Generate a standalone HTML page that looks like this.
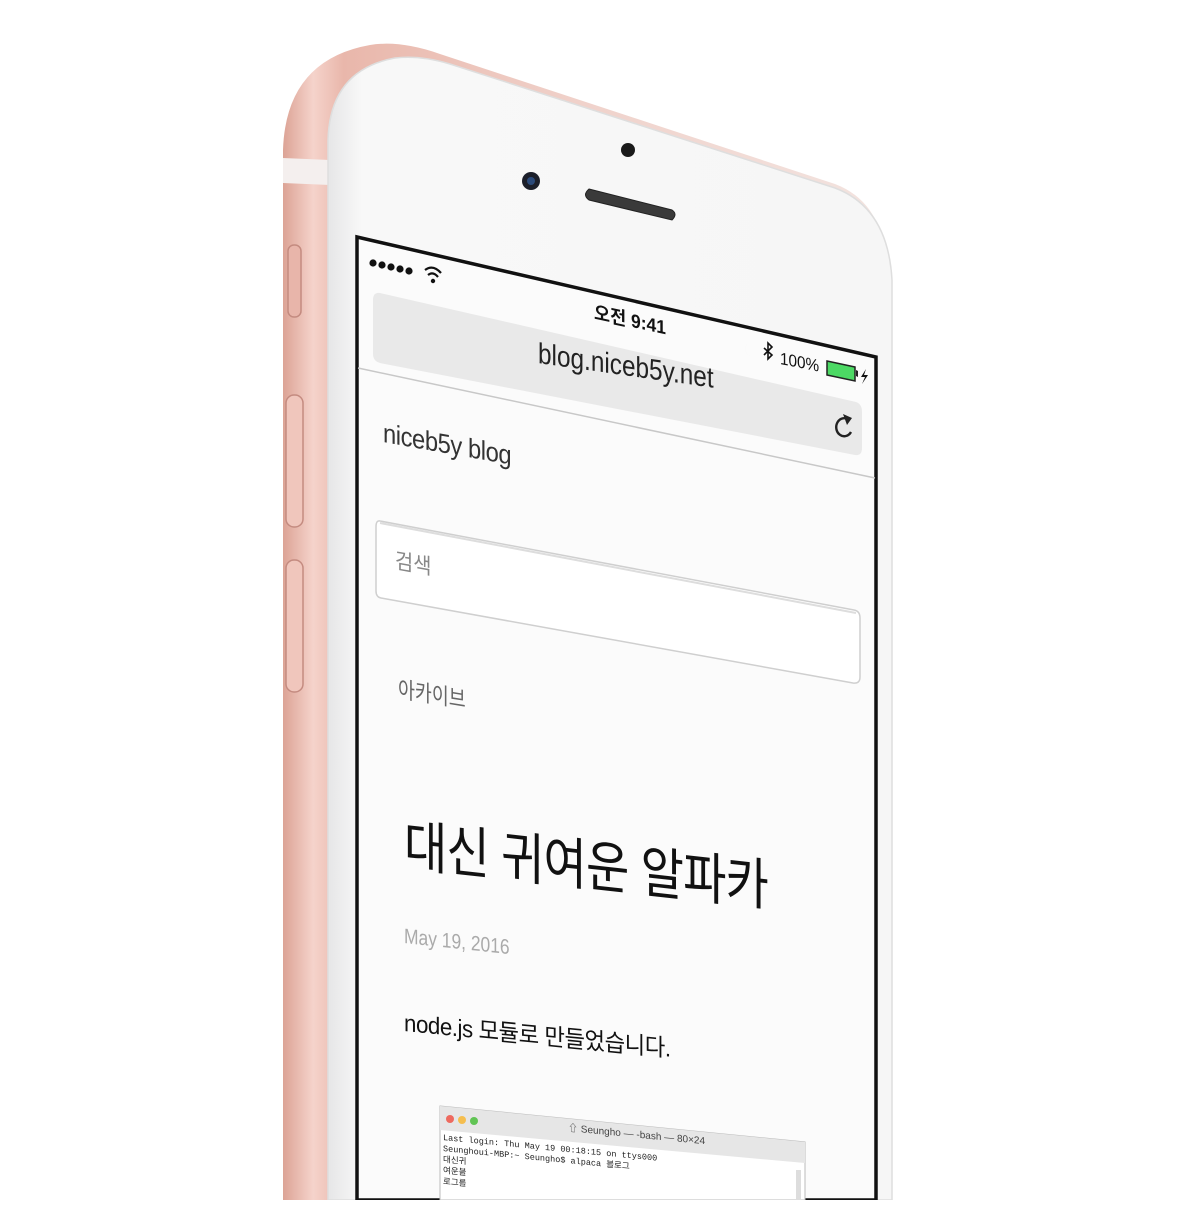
<!DOCTYPE html>
<html><head><meta charset="utf-8">
<style>
html,body{margin:0;padding:0;background:#fff;}
body{width:1200px;height:1200px;position:relative;overflow:hidden;font-family:"Liberation Sans","Noto Sans CJK KR",sans-serif;}
svg{position:absolute;left:0;top:0;}
.t{position:absolute;white-space:nowrap;transform-origin:0 0;line-height:1;}
</style></head><body>
<svg width="1200" height="1200" viewBox="0 0 1200 1200">
  <defs>
    <linearGradient id="pk" x1="0" x2="1" y1="0" y2="0">
      <stop offset="0" stop-color="#dca395"/>
      <stop offset="0.05" stop-color="#f5d3cb"/>
      <stop offset="0.1" stop-color="#e9b7ab"/>
      <stop offset="0.5" stop-color="#f0d2cb"/>
      <stop offset="1" stop-color="#f3e4e0"/>
    </linearGradient>
    <linearGradient id="wf" x1="0" x2="1" y1="0" y2="0">
      <stop offset="0" stop-color="#e6e6e7"/>
      <stop offset="0.06" stop-color="#f8f8f8"/>
      <stop offset="1" stop-color="#f6f6f6"/>
    </linearGradient>
  </defs>
  <!-- pink frame -->
  <path d="M283 1200 L283 150 Q286 60 370 45 Q400 40 440 54 L835 184 Q882 202 886 262 L886 1200 Z" fill="url(#pk)"/>
  <!-- antenna band -->
  <path d="M283 158 L330 160 L330 185 L283 183 Z" fill="#f4efee"/>
  <!-- buttons -->
  <rect x="288" y="245" width="13" height="72" rx="6" fill="#e8b5aa" stroke="#c48b80" stroke-width="1.5"/>
  <rect x="286" y="395" width="17" height="132" rx="8" fill="#f0c6bc" stroke="#c48b80" stroke-width="1.5"/>
  <rect x="286" y="560" width="17" height="132" rx="8" fill="#f0c6bc" stroke="#c48b80" stroke-width="1.5"/>
  <!-- white face -->
  <path d="M328 1200 L328 140 Q330 70 395 58 Q420 55 450 64 L835 188 Q888 208 892 280 L892 1200 Z" fill="url(#wf)" stroke="#dedede" stroke-width="1.5"/>
  <!-- camera, sensor, speaker -->
  <circle cx="531" cy="181" r="9" fill="#1c1f2a"/>
  <circle cx="531" cy="181" r="4" fill="#2b4a7a"/>
  <circle cx="628" cy="150" r="7" fill="#1a1a1a"/>
  <path d="M589 189 L672 210 Q678 214 672 220 L589 200 Q582 195 589 189 Z" fill="#3a3a3a" stroke="#222" stroke-width="1"/>
  <!-- screen -->
  <path d="M357 237 L876 357 L876 1200 L357 1200 Z" fill="#fbfbfb" stroke="#111" stroke-width="3.5"/>
  <!-- url bar -->
  <path d="M380 293 L856 402 Q862 404 862 412 L862 448 Q862 456 855 455 L380 363 Q373 361 373 354 L373 300 Q373 292 380 293 Z" fill="#e9e9e9"/>
  <!-- separator -->
  <path d="M358 368 L875 478" stroke="#c8c8c8" stroke-width="1.5"/>
  <!-- signal dots -->
  <g fill="#111"><circle cx="373" cy="263" r="3.6"/><circle cx="382" cy="265" r="3.6"/><circle cx="391" cy="267" r="3.6"/><circle cx="400" cy="269" r="3.6"/><circle cx="409" cy="271" r="3.6"/></g>
  <!-- wifi -->
  <g fill="none" stroke="#111" stroke-width="2.2"><path d="M425 270 Q433 264 441 273"/><path d="M428 275 Q433 271 438 277"/></g>
  <circle cx="433" cy="281" r="2.2" fill="#111"/>
  <!-- moon -->
  <path d="M750 342 A6 6 0 1 0 756 356 A6 6 0 0 1 750 342 Z" fill="#bbb"/>
  <!-- bluetooth -->
  <path d="M764 348 L772 355 L768 359 L768 343 L772 347 L764 355" fill="none" stroke="#111" stroke-width="1.6"/>
  <!-- battery -->
  <path d="M827 361 L855 367 L855 381 L827 375 Z" fill="#4cd964" stroke="#222" stroke-width="1.5"/>
  <path d="M856 370 L858 371 L858 377 L856 376 Z" fill="#222"/>
  <path d="M866 369 L861 377 L865 377 L862 384 L868 375 L864 375 Z" fill="#111"/>
  <!-- reload -->
  <path d="M849 420 A8 9 0 1 0 851 432" fill="none" stroke="#222" stroke-width="2.4"/>
  <path d="M843 414 L852 418 L847 425 Z" fill="#222"/>
  <!-- search box -->
  <path d="M380 521 L854 610 Q860 611 860 618 L860 677 Q860 684 853 683 L381 598 Q376 597 376 591 L376 527 Q376 520 380 521 Z" fill="#fff" stroke="#cfcfcf" stroke-width="1.5"/>
  <path d="M380 523 L856 613" stroke="#ddd" stroke-width="2"/>
  <!-- terminal -->
  <g>
    <path d="M440 1106 L805 1142 L805 1200 L440 1200 Z" fill="#fff" stroke="#bbb" stroke-width="1"/>
    <path d="M440 1106 L805 1142 L805 1163 L440 1130 Z" fill="#e6e6e6"/>
    <circle cx="450" cy="1119" r="4" fill="#ee6a5f"/>
    <circle cx="462" cy="1120" r="4" fill="#f5be4f"/>
    <circle cx="474" cy="1121" r="4" fill="#61c454"/>
    <rect x="796" y="1170" width="5" height="30" fill="#ddd"/>
  </g>
</svg>

<div class="t" style="left:594px;top:304px;font-size:19px;font-weight:bold;color:#111;transform:skewY(12deg) scaleX(0.92);">오전 9:41</div>
<div class="t" style="left:780px;top:350px;font-size:17px;color:#111;transform:skewY(11deg) scaleX(0.9);">100%</div>
<div class="t" style="left:538px;top:340px;font-size:29px;color:#222;transform:skewY(8deg) scaleX(0.84);">blog.niceb5y.net</div>
<div class="t" style="left:383px;top:420px;font-size:27px;color:#333;transform:skewY(10deg) scaleX(0.88);letter-spacing:-0.5px;">niceb5y blog</div>
<div class="t" style="left:395px;top:550px;font-size:22px;color:#888;transform:skewY(10deg) scaleX(0.9);">검색</div>
<div class="t" style="left:398px;top:678px;font-size:23px;color:#666;transform:skewY(9deg) scaleX(0.8);">아카이브</div>
<div class="t" style="left:404px;top:818px;font-size:56px;color:#111;transform:skewY(6.3deg) scaleX(0.84);letter-spacing:-1px;">대신 귀여운 알파카</div>
<div class="t" style="left:404px;top:926px;font-size:21px;color:#aaa;transform:skewY(6deg) scaleX(0.83);">May 19, 2016</div>
<div class="t" style="left:404px;top:1012px;font-size:24px;color:#111;transform:skewY(5.5deg) scaleX(0.93);letter-spacing:-0.5px;">node.js 모듈로 만들었습니다.</div>
<div class="t" style="left:568px;top:1124px;font-size:10px;color:#444;transform:skewY(5.5deg);">⇧ Seungho — -bash — 80×24</div>
<div class="t" style="left:443px;top:1133px;font-family:'Liberation Mono','Noto Sans CJK KR',monospace;font-size:8.5px;color:#222;line-height:11px;transform:skewY(5.5deg);">Last login: Thu May 19 00:18:15 on ttys000<br>Seunghoui-MBP:~ Seungho$ alpaca 블로그<br>대신귀<br>여운블<br>로그를</div>
</body></html>
